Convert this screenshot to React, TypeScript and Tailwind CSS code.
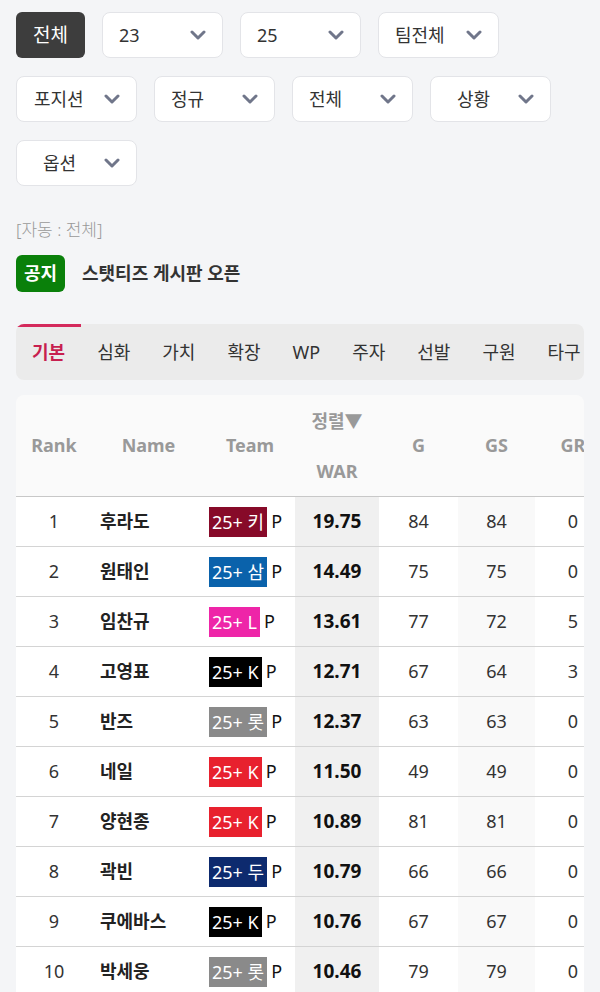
const filters = [
  { label: "23", pl: "pl-4" },
  { label: "25", pl: "pl-4" },
  { label: "팀전체", pl: "pl-4" },
  { label: "포지션", pl: "pl-[17px]" },
  { label: "정규", pl: "pl-4" },
  { label: "전체", pl: "pl-4" },
  { label: "상황", pl: "pl-[26px]" },
  { label: "옵션", pl: "pl-[26px]" },
];

const tabs = ["기본", "심화", "가치", "확장", "WP", "주자", "선발", "구원", "타구", "투구"];

type Player = {
  rank: number;
  name: string;
  team: string;
  badge: string;
  war: string;
  g: number;
  gs: number;
  gr: number;
};

const players: Array<Player> = [
  { rank: 1, name: "후라도", team: "키", badge: "bg-[#870a29]", war: "19.75", g: 84, gs: 84, gr: 0 },
  { rank: 2, name: "원태인", team: "삼", badge: "bg-[#0a62ab]", war: "14.49", g: 75, gs: 75, gr: 0 },
  { rank: 3, name: "임찬규", team: "L", badge: "bg-[#ee25a8]", war: "13.61", g: 77, gs: 72, gr: 5 },
  { rank: 4, name: "고영표", team: "K", badge: "bg-black", war: "12.71", g: 67, gs: 64, gr: 3 },
  { rank: 5, name: "반즈", team: "롯", badge: "bg-[#8a8a8a]", war: "12.37", g: 63, gs: 63, gr: 0 },
  { rank: 6, name: "네일", team: "K", badge: "bg-[#e8212e]", war: "11.50", g: 49, gs: 49, gr: 0 },
  { rank: 7, name: "양현종", team: "K", badge: "bg-[#e8212e]", war: "10.89", g: 81, gs: 81, gr: 0 },
  { rank: 8, name: "곽빈", team: "두", badge: "bg-[#0d2a6e]", war: "10.79", g: 66, gs: 66, gr: 0 },
  { rank: 9, name: "쿠에바스", team: "K", badge: "bg-black", war: "10.76", g: 67, gs: 67, gr: 0 },
  { rank: 10, name: "박세웅", team: "롯", badge: "bg-[#8a8a8a]", war: "10.46", g: 79, gs: 79, gr: 0 },
];

function Chevron() {
  return (
    <svg width="16" height="10" viewBox="0 0 16 10" className="shrink-0">
      <path d="M2 2l6 6 6-6" fill="none" stroke="#70768a" strokeWidth="3" strokeLinecap="round" strokeLinejoin="round" />
    </svg>
  );
}

function App() {
  return (
    <div
      className="min-h-screen bg-[#f4f5f7] px-4 pt-3 text-[#333]"
      style={{ fontFamily: '"Noto Sans", "Noto Sans CJK KR", sans-serif' }}
    >
      {/* filter selects */}
      <div className="flex flex-wrap gap-x-[17px] gap-y-[18px]">
        <button className="h-[46px] w-[69px] rounded-md bg-[#3d3d3d] text-[19px] text-white">전체</button>
        {filters.map((f, i) => (
          <div
            key={i}
            className={`flex h-[46px] w-[121px] items-center justify-between rounded-lg border border-[#e3e4e8] bg-white pr-4 text-[18px] ${f.pl}`}
          >
            <span>{f.label}</span>
            <Chevron />
          </div>
        ))}
      </div>

      <div className="mt-[32px] text-[17px] font-light leading-6 text-[#999]">[자동 : 전체]</div>

      <div className="mt-[13px] flex items-center">
        <span className="flex h-[37px] w-[49px] items-center justify-center rounded-md bg-[#0a800a] text-[18px] font-bold text-white">
          공지
        </span>
        <span className="ml-[17px] text-[18px] font-bold text-[#333]">스탯티즈 게시판 오픈</span>
      </div>

      {/* tab bar */}
      <div className="mt-8 flex h-[56px] overflow-hidden rounded-lg bg-[#ebebeb]">
        {tabs.map((t, i) => (
          <div
            key={i}
            className={
              i === 0
                ? "flex shrink-0 items-center border-t-[3px] border-[#d42a5c] px-4 pb-[3px] text-[18px] font-bold text-[#c71f4f]"
                : "flex shrink-0 items-center px-4 text-[18px] text-[#333]"
            }
          >
            {t}
          </div>
        ))}
      </div>

      {/* stats table */}
      <div className="mt-[15px] overflow-hidden rounded-t-lg">
        <div className="flex h-[102px] w-max border-b border-[#c8c8c8] bg-[#fafafa] text-[18px] font-bold text-[#999]">
          <div className="flex w-[76px] items-center justify-center">Rank</div>
          <div className="flex w-[113px] items-center justify-center">Name</div>
          <div className="flex w-[90px] items-center justify-center">Team</div>
          <div className="flex w-[84px] flex-col items-center justify-center gap-[22px]">
            <span className="leading-7">정렬▼</span>
            <span className="leading-7">WAR</span>
          </div>
          <div className="flex w-[79px] items-center justify-center">G</div>
          <div className="flex w-[77px] items-center justify-center">GS</div>
          <div className="flex w-[76px] items-center justify-center">GR</div>
          <div className="flex w-[76px] items-center justify-center">GF</div>
        </div>
        {players.map((p) => (
          <div key={p.rank} className="flex h-[50px] w-max border-b border-[#d4d4d4] bg-white text-[18px]">
            <div className="flex w-[76px] items-center justify-center">{p.rank}</div>
            <div className="flex w-[113px] items-center pl-2 font-bold text-[#222]">{p.name}</div>
            <div className="flex w-[90px] items-center pl-[4px]">
              <span className={`h-[30px] px-[3px] leading-[30px] text-white ${p.badge}`}>25+ {p.team}</span>
              <span className="ml-[4px] text-[#111]">P</span>
            </div>
            <div className="flex w-[84px] items-center justify-center bg-[#f0f0f0] text-[19px] font-bold text-[#111]">
              {p.war}
            </div>
            <div className="flex w-[79px] items-center justify-center">{p.g}</div>
            <div className="flex w-[77px] items-center justify-center bg-[#f9f9f9]">{p.gs}</div>
            <div className="flex w-[76px] items-center justify-center">{p.gr}</div>
            <div className="flex w-[76px] items-center justify-center">0</div>
          </div>
        ))}
      </div>
    </div>
  );
}

export default App;
